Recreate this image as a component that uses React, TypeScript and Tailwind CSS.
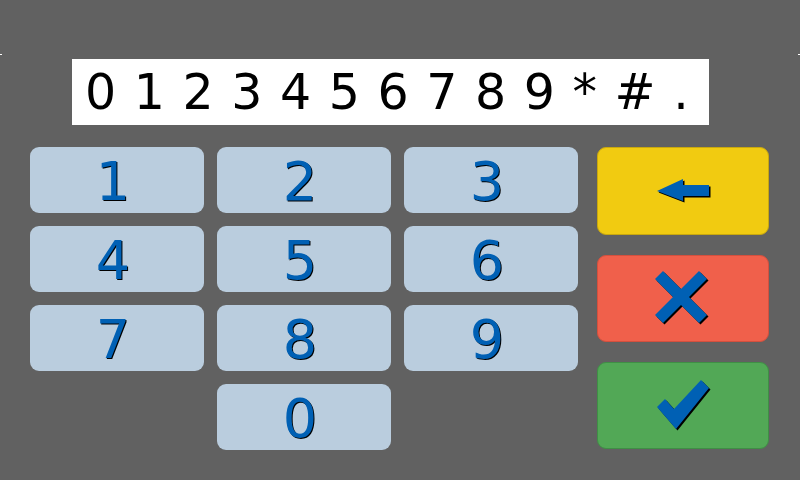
const keys = ['1', '2', '3', '4', '5', '6', '7', '8', '9'];

function KeyButton({ label }: { label: string }) {
  return (
    <button className="flex h-[66px] items-center justify-center rounded-[9px] bg-[#bacdde] pr-[8px] pt-1 text-[54px] leading-none text-[#0060b4] [font-family:'DejaVu_Sans',sans-serif] [text-shadow:1px_1px_0_#000]">
      {label}
    </button>
  );
}

function BackArrow() {
  return (
    <svg width="56" height="26" viewBox="0 0 56 26">
      <polygon points="2,13 28,1 28,7 54,7 54,18 28,18 28,23" fill="#000" transform="translate(1.5,1.5)" />
      <polygon points="2,13 28,1 28,7 54,7 54,18 28,18 28,23" fill="#0060b4" />
    </svg>
  );
}

function Cross() {
  const d = 'M8,0 L26,18 L44,0 L52,8 L34,26 L52,44 L44,52 L26,34 L8,52 L0,44 L18,26 L0,8 Z';
  return (
    <svg width="56" height="56" viewBox="0 0 56 56">
      <path d={d} fill="#000" transform="translate(1.5,1.5)" />
      <path d={d} fill="#0060b4" />
    </svg>
  );
}

function Check() {
  const d = 'M0,27 L8,19 L17,29 L44,0 L52,8 L19,49 Z';
  return (
    <svg width="56" height="52" viewBox="0 0 56 52">
      <path d={d} fill="#000" transform="translate(1.5,1.5)" />
      <path d={d} fill="#0060b4" />
    </svg>
  );
}

export default function App() {
  return (
    <div className="flex h-[480px] w-[800px] flex-col bg-[#616161]">
      <div className="mt-[54px] flex h-px justify-between">
        <span className="w-[2px] bg-white" />
        <span className="w-[2px] bg-white" />
      </div>
      <div className="ml-[72px] mt-[4px] flex h-[66px] w-[637px] items-center bg-white pl-[13px] text-[49px] leading-none text-black [font-family:'DejaVu_Sans',sans-serif] [word-spacing:2px]">
        0 1 2 3 4 5 6 7 8 9 * # .
      </div>
      <div className="ml-[30px] mt-[22px] flex gap-[19px]">
        <div className="grid w-[548px] grid-cols-3 gap-x-[13px] gap-y-[13px]">
          {keys.map((k) => (
            <KeyButton key={k} label={k} />
          ))}
          <div />
          <KeyButton label="0" />
        </div>
        <div className="flex w-[172px] flex-col gap-[20px]">
          <button className="flex h-[88px] items-center justify-center rounded-[9px] border border-[#c9a80e] bg-[#f1cb11]">
            <BackArrow />
          </button>
          <button className="flex h-[87px] items-center justify-center rounded-[9px] border border-[#d4503e] bg-[#f0604b]">
            <Cross />
          </button>
          <button className="flex h-[87px] items-center justify-center rounded-[9px] border border-[#3f8f45] bg-[#52a856] pl-[4px]">
            <Check />
          </button>
        </div>
      </div>
    </div>
  );
}
